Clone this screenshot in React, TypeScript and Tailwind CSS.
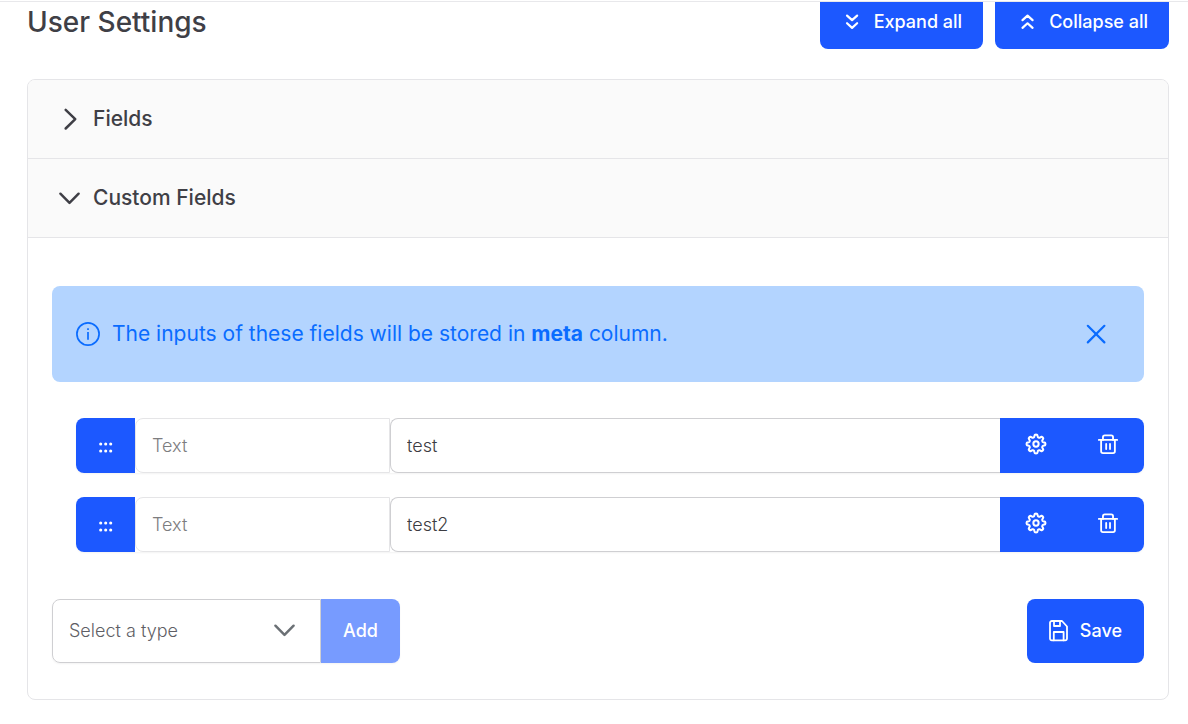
import { useState } from "react";
import type { ReactNode } from "react";

type IconProps = { d: string[]; className?: string; width?: number; box?: string };

function Icon({ d, className = "size-6", width = 2, box = "0 0 24 24" }: IconProps) {
  return (
    <svg
      viewBox={box}
      className={`shrink-0 ${className}`}
      fill="none"
      stroke="currentColor"
      strokeWidth={width}
      strokeLinecap="round"
      strokeLinejoin="round"
      aria-hidden="true"
    >
      {d.map((path) => (
        <path key={path} d={path} />
      ))}
    </svg>
  );
}

const icons = {
  right: ["M8 2 18 11.7 8 21.4"],
  down: ["M2.5 7 12 16.5 21.5 7"],
  expand: ["M5.5 5 11 10 16.5 5", "M5.5 13.4 11 18.4 16.5 13.4"],
  collapse: ["M6 10 11.5 5 17 10", "M6 18.4 11.5 13.4 17 18.4"],
  close: ["M3.8 3.8 20.4 20.4", "M20.4 3.8 3.8 20.4"],
  trash: [
    "M2 7.5H22",
    "M6.5 7.5V4.5a2 2 0 0 1 2-2h7a2 2 0 0 1 2 2v3",
    "M4.5 7.5V20a2 2 0 0 0 2 2h11a2 2 0 0 0 2-2V7.5",
    "M10 12V17.5",
    "M14.2 12V17.5",
  ],
  save: [
    "M3 1H13L18 6.5V18.5a1.8 1.8 0 0 1-1.8 1.8H2.8A1.8 1.8 0 0 1 1 18.5V2.8A1.8 1.8 0 0 1 2.8 1Z",
    "M5 1V6H11V1",
    "M4.8 20.3V12H14.6V20.3",
  ],
};

function gearPath() {
  const points: string[] = [];
  for (let i = 0; i <= 96; i++) {
    const a = (i / 96) * Math.PI * 2;
    const c = Math.cos(a * 8);
    const r = 8.9 + 1.4 * Math.tanh(2 * c);
    points.push(`${(12 + r * Math.cos(a)).toFixed(2)} ${(12 + r * Math.sin(a)).toFixed(2)}`);
  }
  return `M${points.join("L")}Z`;
}

function Gear() {
  return (
    <svg viewBox="0 0 24 24" className="size-[22px]" fill="none" stroke="currentColor" strokeWidth="2.2" strokeLinejoin="round" aria-hidden="true">
      <path d={gearPath()} />
      <circle cx="12" cy="12" r="2.9" />
    </svg>
  );
}

function Grip() {
  return (
    <svg viewBox="0 0 16 12" className="h-3 w-4" fill="currentColor" aria-hidden="true">
      {[2.7, 7.7, 12.7].map((x) =>
        [2, 9].map((y) => <circle key={`${x}-${y}`} cx={x} cy={y} r="1.55" />),
      )}
    </svg>
  );
}

function HeaderButton({ icon, children }: { icon: string[]; children: ReactNode }) {
  return (
    <button type="button" className="flex h-[47px] items-center gap-2.5 rounded-b-lg bg-[#1c58ff] pr-[21px] pb-[7px] pl-[22px] text-lg font-medium text-white">
      <Icon d={icon} className="size-[22px]" width={2.4} />
      {children}
    </button>
  );
}

function SectionHeader({ open, onClick, children }: { open: boolean; onClick: () => void; children: ReactNode }) {
  return (
    <h2>
      <button
        type="button"
        aria-expanded={open}
        onClick={onClick}
        className="flex h-[79px] w-full items-center gap-3 border-b border-[#e5e5e8] bg-[#fafafa] px-[30px] text-left text-[21px] font-medium"
      >
        <Icon d={open ? icons.down : icons.right} className="size-[23px]" width={2.6} />
        {children}
      </button>
    </h2>
  );
}

function FieldRow({ id, name }: { id: number; name: string }) {
  return (
    <li className="flex h-[55px] rounded-lg shadow-xs">
      <button type="button" aria-label="Reorder" className="flex w-[59px] items-center justify-center rounded-l-lg bg-[#1c58ff] pt-1 text-white">
        <Grip />
      </button>
      <input
        aria-label={`Type of field ${id}`}
        placeholder="Text"
        readOnly
        className="w-[255px] rounded-l-lg border border-[#e5e5e7] bg-white px-4 text-lg font-light placeholder:text-[#7d7d80]"
      />
      <input
        aria-label={`Name of field ${id}`}
        defaultValue={name}
        className="min-w-0 flex-1 rounded-l-lg border border-r-0 border-[#cfcfd2] bg-white px-4 text-lg font-light text-[#3c3c42]"
      />
      <button type="button" aria-label="Field settings" className="flex w-[72px] items-center justify-center bg-[#1c58ff] pb-[3px] text-white">
        <Gear />
      </button>
      <button type="button" aria-label="Delete field" className="flex w-[72px] items-center justify-center rounded-r-lg bg-[#1c58ff] pb-[3px] text-white">
        <Icon d={icons.trash} className="size-[22px]" />
      </button>
    </li>
  );
}

export default function App() {
  const [fieldsOpen, setFieldsOpen] = useState(false);
  const [customOpen, setCustomOpen] = useState(true);
  const [notice, setNotice] = useState(true);

  return (
    <main className="min-h-screen bg-white font-['Inter',sans-serif] text-[#3f3f46]">
      <div className="h-0.5 border-b border-[#e8e8eb]" />
      <div className="pr-[19px] pl-[27px]">
        <header className="flex items-center justify-between">
          <h1 className="pb-[7px] text-[28px] leading-9 font-medium">User Settings</h1>
          <div className="flex gap-3">
            <HeaderButton icon={icons.expand}>Expand all</HeaderButton>
            <HeaderButton icon={icons.collapse}>Collapse all</HeaderButton>
          </div>
        </header>

        <section className="mt-[30px] overflow-hidden rounded-lg border border-[#e5e5e8]">
          <SectionHeader open={fieldsOpen} onClick={() => setFieldsOpen(!fieldsOpen)}>Fields</SectionHeader>
          <SectionHeader open={customOpen} onClick={() => setCustomOpen(!customOpen)}>Custom Fields</SectionHeader>
          {customOpen && (
            <div className="px-6 pt-12 pb-9">
              {notice && (
                <div role="status" className="flex h-24 items-center gap-3 rounded-lg bg-[#b3d4ff] px-6 text-[21px] text-[#0a6cff]">
                  <svg viewBox="0 0 24 24" className="size-6 shrink-0" fill="none" stroke="currentColor" strokeWidth="1.7" aria-hidden="true">
                    <circle cx="12" cy="12" r="11.1" />
                    <path d="M12 10V17.8M12 6.2V8" />
                  </svg>
                  <p className="flex-1">
                    The inputs of these fields will be stored in <strong className="font-bold">meta</strong> column.
                  </p>
                  <button type="button" aria-label="Dismiss" onClick={() => setNotice(false)} className="flex w-12 justify-center">
                    <Icon d={icons.close} width={2.2} />
                  </button>
                </div>
              )}

              <ul className="mt-9 flex flex-col gap-6 pl-6">
                <FieldRow id={1} name="test" />
                <FieldRow id={2} name="test2" />
              </ul>

              <div className="mt-[47px] flex h-16 justify-between">
                <div className="flex rounded-lg shadow-xs">
                  <div className="relative flex">
                    <select
                      aria-label="Field type"
                      defaultValue=""
                      className="w-[269px] appearance-none rounded-l-lg border border-[#cfcfd2] bg-white px-4 text-lg font-light text-[#5f5f66]"
                    >
                      <option value="">Select a type</option>
                      <option value="text">Text</option>
                    </select>
                    <span className="pointer-events-none absolute top-0 right-[25px] bottom-0.5 flex items-center text-[#6b7075]">
                      <Icon d={icons.down} className="size-[23px]" width={2.6} />
                    </span>
                  </div>
                  <button type="button" disabled className="w-[79px] rounded-r-lg bg-[#779bff] text-lg font-medium text-white">
                    Add
                  </button>
                </div>
                <button type="submit" className="flex items-center gap-3 rounded-lg bg-[#1c58ff] px-[22px] text-lg font-medium text-white">
                  <Icon d={icons.save} box="0 0 19 22" className="h-[22px] w-[19px]" width={1.8} />
                  Save
                </button>
              </div>
            </div>
          )}
        </section>
      </div>
    </main>
  );
}
